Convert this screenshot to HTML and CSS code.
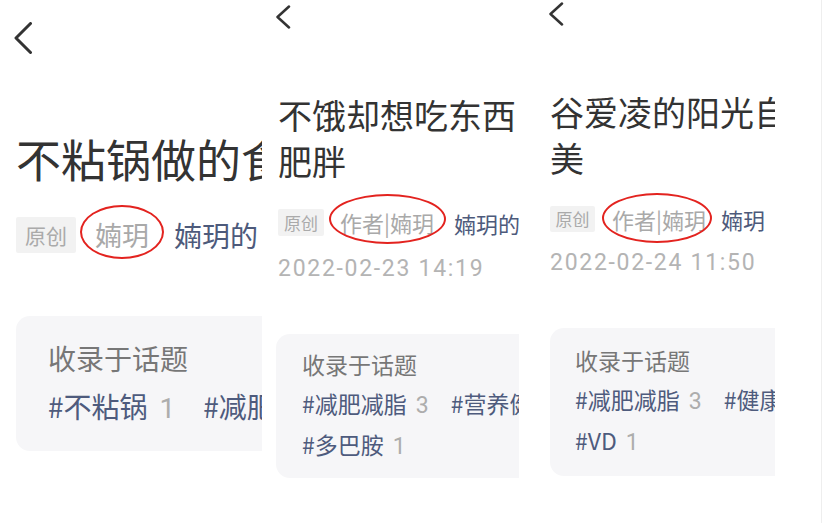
FILE: index.html
```html
<!DOCTYPE html>
<html lang="zh-CN">
<head>
<meta charset="utf-8">
<title>婻玥</title>
<link rel="stylesheet" href="styles.css">
</head>
<body>
<div class="strip">
  <!-- 截图一 -->
  <div class="shot s1">
    <svg class="back" width="18" height="32" viewBox="0 0 18 32"><polyline points="16.5,1.5 2,16 16.5,30.5" /></svg>
    <div class="title"><span>不粘锅做的食物</span></div>
    <div class="meta">
      <span class="tag">原创</span>
      <span class="author">婻玥</span>
      <span class="name">婻玥的</span>
    </div>
    <div class="card">
      <div class="card-hd">收录于话题</div>
      <div class="topics">
        <span class="topic">#不粘锅<i>1</i></span>
        <span class="topic">#减肥减脂<i>3</i></span>
      </div>
    </div>
  </div>

  <!-- 截图二 -->
  <div class="shot s2">
    <svg class="back" width="16" height="24" viewBox="0 0 16 24"><polyline points="14,1.5 2.5,12 14,22.5" /></svg>
    <div class="title"><span>不饿却想吃东西</span><span>肥胖</span></div>
    <div class="meta">
      <span class="tag">原创</span>
      <span class="author">作者|婻玥</span>
      <span class="name">婻玥的</span>
    </div>
    <div class="date">2022-02-23 14:19</div>
    <div class="card">
      <div class="card-hd">收录于话题</div>
      <div class="topics">
        <span class="topic">#减肥减脂<i>3</i></span>
        <span class="topic">#营养健康<i>2</i></span>
      </div>
      <div class="topics">
        <span class="topic">#多巴胺<i>1</i></span>
      </div>
    </div>
  </div>

  <!-- 截图三 -->
  <div class="shot s3">
    <svg class="back" width="16" height="24" viewBox="0 0 16 24"><polyline points="14,1.5 2.5,12 14,22.5" /></svg>
    <div class="title"><span>谷爱凌的阳光自信</span><span>美</span></div>
    <div class="meta">
      <span class="tag">原创</span>
      <span class="author">作者|婻玥</span>
      <span class="name">婻玥</span>
    </div>
    <div class="date">2022-02-24 11:50</div>
    <div class="card">
      <div class="card-hd">收录于话题</div>
      <div class="topics">
        <span class="topic">#减肥减脂<i>3</i></span>
        <span class="topic">#健康饮食<i>2</i></span>
      </div>
      <div class="topics">
        <span class="topic">#VD<i>1</i></span>
      </div>
    </div>
  </div>

  <div class="edge"></div>
</div>
</body>
</html>
```

FILE: styles.css
```css
html,body,div,span,i{margin:0;padding:0;}
body{background:#fff;font-family:"Noto Sans CJK SC","Noto Sans",sans-serif;color:#333;}
.strip{display:flex;height:523px;overflow:hidden;}

.shot{flex:none;overflow:hidden;box-sizing:border-box;}
.shot .back{display:block;fill:none;stroke:#333;stroke-linecap:round;stroke-linejoin:round;}
.shot .title span{display:block;white-space:nowrap;}
.shot .meta{display:flex;align-items:center;white-space:nowrap;}
.shot .tag{flex:none;background:#f2f2f2;color:#aaa;text-align:center;border-radius:2px;}
.shot .author{flex:none;position:relative;color:#a9a9a9;}
.shot .author::after{content:"";position:absolute;border:2px solid #e3231f;border-radius:50%;}
.shot .name{flex:none;color:#4d5a7b;}
.shot .date{font-family:Roboto,"Noto Sans",sans-serif;color:#b4b4b4;white-space:nowrap;}
.shot .card{background:#f6f6f8;border-radius:14px;white-space:nowrap;}
.shot .card-hd{color:#777;}
.shot .topics{display:flex;}
.shot .topic{color:#4e5b7d;}
.shot .topic i{font-style:normal;color:#adadad;font-family:Roboto,"Noto Sans",sans-serif;}

/* 截图一 */
.s1{width:262px;padding-left:16px;}
.s1 .back{margin:22px 0 0 -2px;stroke-width:3;}
.s1 .title{margin-top:79px;font-size:45px;line-height:52px;}
.s1 .meta{margin-top:32px;height:36px;}
.s1 .tag{width:60px;height:36px;line-height:36px;font-size:21px;}
.s1 .author{margin-left:19px;font-size:27px;line-height:36px;}
.s1 .author::after{left:-15px;right:-15px;top:-12px;bottom:-6px;}
.s1 .name{margin-left:25px;font-size:28px;}
.s1 .card{margin-top:63px;width:300px;padding:22px 32px 22px;font-size:28px;line-height:40px;}
.s1 .topics{margin-top:8px;}
.s1 .topic{margin-right:28px;}
.s1 .topic i{margin-left:12px;}

/* 截图二 */
.s2{width:257px;padding-left:16px;}
.s2 .back{margin:5px 0 0 -3px;stroke-width:2.5;}
.s2 .title{margin-top:63px;font-size:34px;line-height:46px;}
.s2 .meta{margin-top:25px;height:27px;}
.s2 .tag{width:46px;height:27px;line-height:27px;font-size:17px;}
.s2 .author{margin-left:16px;font-size:22px;line-height:27px;}
.s2 .author::after{left:-11px;right:-12px;top:-15px;bottom:-8px;}
.s2 .name{margin-left:20px;font-size:22px;}
.s2 .date{margin-top:20px;font-size:23px;line-height:26px;letter-spacing:1.7px;}
.s2 .card{margin:52px 0 0 -2px;width:260px;padding:13px 26px 14px;font-size:23px;line-height:35px;}
.s2 .topics{margin-top:4px;}
.s2 .topic{margin-right:22px;}
.s2 .topic i{margin-left:9px;}

/* 截图三 */
.s3{width:245px;margin-left:11px;padding-left:20px;}
.s3 .back{margin:2px 0 0 -2px;stroke-width:2.5;}
.s3 .title{margin-top:63px;font-size:34px;line-height:46px;}
.s3 .meta{margin-top:25px;height:26px;}
.s3 .tag{width:45px;height:26px;line-height:26px;font-size:17px;}
.s3 .author{margin-left:17px;font-size:22px;line-height:26px;}
.s3 .author::after{left:-10px;right:-6px;top:-13px;bottom:-11px;}
.s3 .name{margin-left:15px;font-size:22px;}
.s3 .date{margin-top:18px;font-size:23px;line-height:26px;letter-spacing:1.7px;}
.s3 .card{margin-top:52px;width:240px;padding:15px 25px 16px;font-size:23px;line-height:35px;}
.s3 .topics{margin-top:4px;}
.s3 .topic{margin-right:22px;}
.s3 .topic i{margin-left:9px;}

.edge{flex:1;margin-right:2px;border-right:1px solid #eee;}
```
